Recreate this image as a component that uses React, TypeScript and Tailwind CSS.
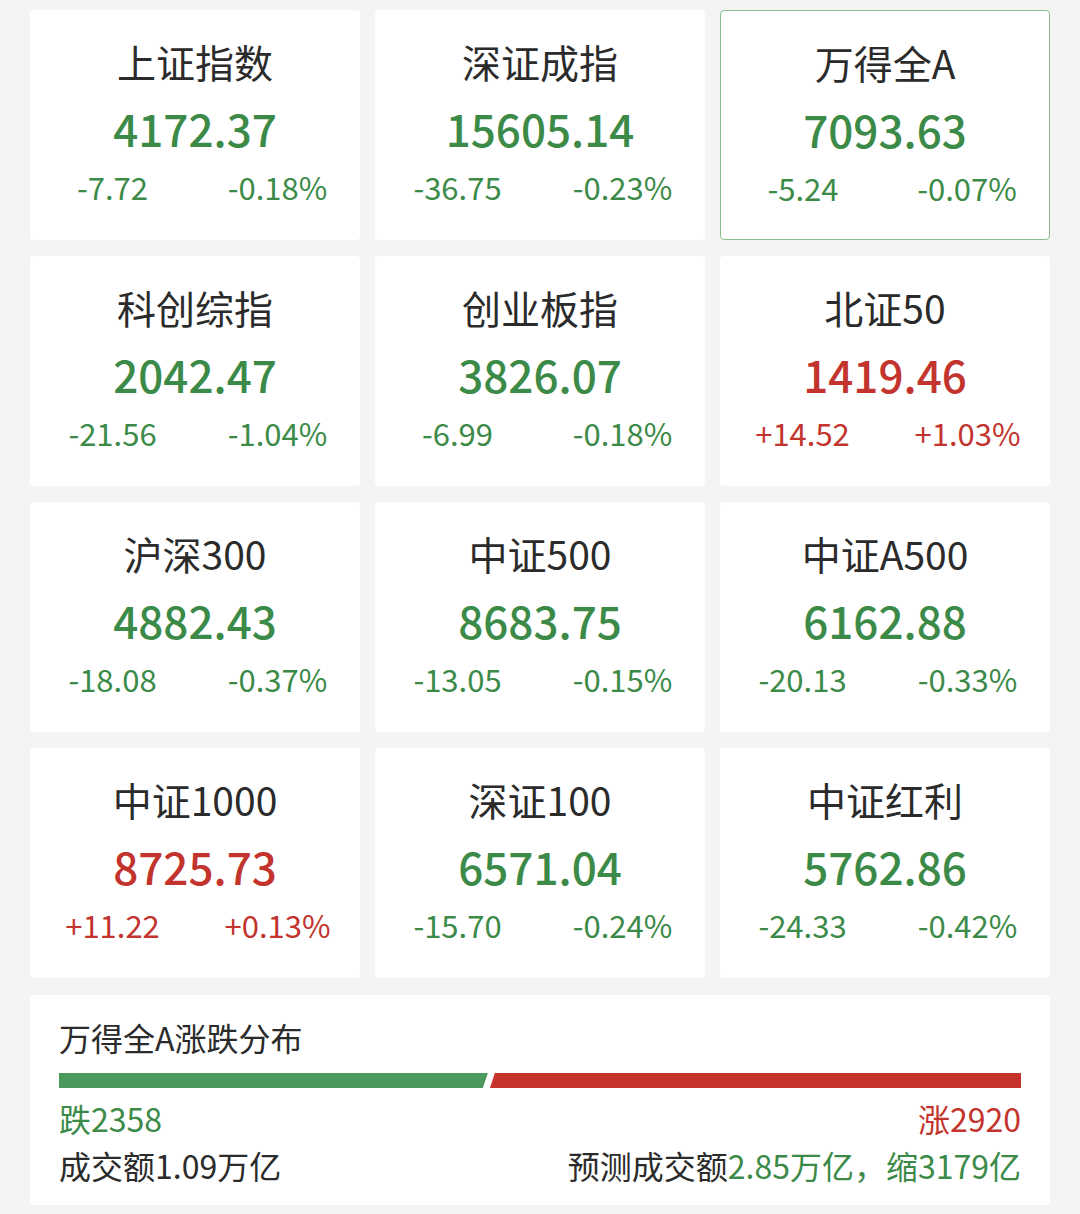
import React from "react";

type Item = { name: string; value: string; chg: string; pct: string; up: boolean; sel?: boolean };

const items: Item[] = [
  { name: "上证指数", value: "4172.37", chg: "-7.72", pct: "-0.18%", up: false },
  { name: "深证成指", value: "15605.14", chg: "-36.75", pct: "-0.23%", up: false },
  { name: "万得全A", value: "7093.63", chg: "-5.24", pct: "-0.07%", up: false, sel: true },
  { name: "科创综指", value: "2042.47", chg: "-21.56", pct: "-1.04%", up: false },
  { name: "创业板指", value: "3826.07", chg: "-6.99", pct: "-0.18%", up: false },
  { name: "北证50", value: "1419.46", chg: "+14.52", pct: "+1.03%", up: true },
  { name: "沪深300", value: "4882.43", chg: "-18.08", pct: "-0.37%", up: false },
  { name: "中证500", value: "8683.75", chg: "-13.05", pct: "-0.15%", up: false },
  { name: "中证A500", value: "6162.88", chg: "-20.13", pct: "-0.33%", up: false },
  { name: "中证1000", value: "8725.73", chg: "+11.22", pct: "+0.13%", up: true },
  { name: "深证100", value: "6571.04", chg: "-15.70", pct: "-0.24%", up: false },
  { name: "中证红利", value: "5762.86", chg: "-24.33", pct: "-0.42%", up: false },
];

const font = { fontFamily: '"Noto Sans CJK SC", "Noto Sans", sans-serif' };

function Card({ it }: { it: Item }) {
  const color = it.up ? "text-[#c2342d]" : "text-[#3c8a48]";
  return (
    <div
      className={
        "h-[230px] rounded-[4px] bg-white flex flex-col items-center pt-[28px] " +
        (it.sel ? "border-[1.5px] border-[#8cbf8c]" : "")
      }
    >
      <div className="text-[39px] leading-[46px] text-[#2b2b2b]">{it.name}</div>
      <div className={"mt-[18px] text-[44px] leading-[52px] font-medium " + color}>{it.value}</div>
      <div className={"mt-[14px] w-full grid grid-cols-2 text-[31px] leading-[38px] " + color}>
        <div className="text-center">{it.chg}</div>
        <div className="text-center">{it.pct}</div>
      </div>
    </div>
  );
}

export default function App() {
  const down = 2358;
  const up = 2920;
  return (
    <div className="w-[1080px] h-[1214px] bg-[#f4f4f4] px-[30px] pt-[10px]" style={font}>
      <div className="grid grid-cols-3 gap-x-[15px] gap-y-[16px]">
        {items.map((it) => (
          <Card key={it.name} it={it} />
        ))}
      </div>
      <div className="mt-[17px] h-[210px] rounded-[4px] bg-white px-[29px] pt-[21px]">
        <div className="text-[32px] leading-[42px] text-[#2b2b2b]">万得全A涨跌分布</div>
        <div className="mt-[15px] flex h-[15px] w-[962px]">
          <div
            className="h-full bg-[#4b9a5b] [clip-path:polygon(0_0,100%_0,calc(100%-5px)_100%,0_100%)]"
            style={{ flex: down }}
          />
          <div className="w-[2px]" />
          <div
            className="h-full bg-[#c6332c] [clip-path:polygon(5px_0,100%_0,100%_100%,0_100%)]"
            style={{ flex: up }}
          />
        </div>
        <div className="mt-[9px] flex justify-between text-[32px] leading-[42px] w-[962px]">
          <span className="text-[#3c8a48]">跌{down}</span>
          <span className="text-[#c2342d]">涨{up}</span>
        </div>
        <div className="mt-[5px] flex justify-between text-[32px] leading-[42px] w-[962px] text-[#2b2b2b]">
          <span>成交额1.09万亿</span>
          <span>
            预测成交额<span className="text-[#3c8a48]">2.85万亿，缩3179亿</span>
          </span>
        </div>
      </div>
    </div>
  );
}
